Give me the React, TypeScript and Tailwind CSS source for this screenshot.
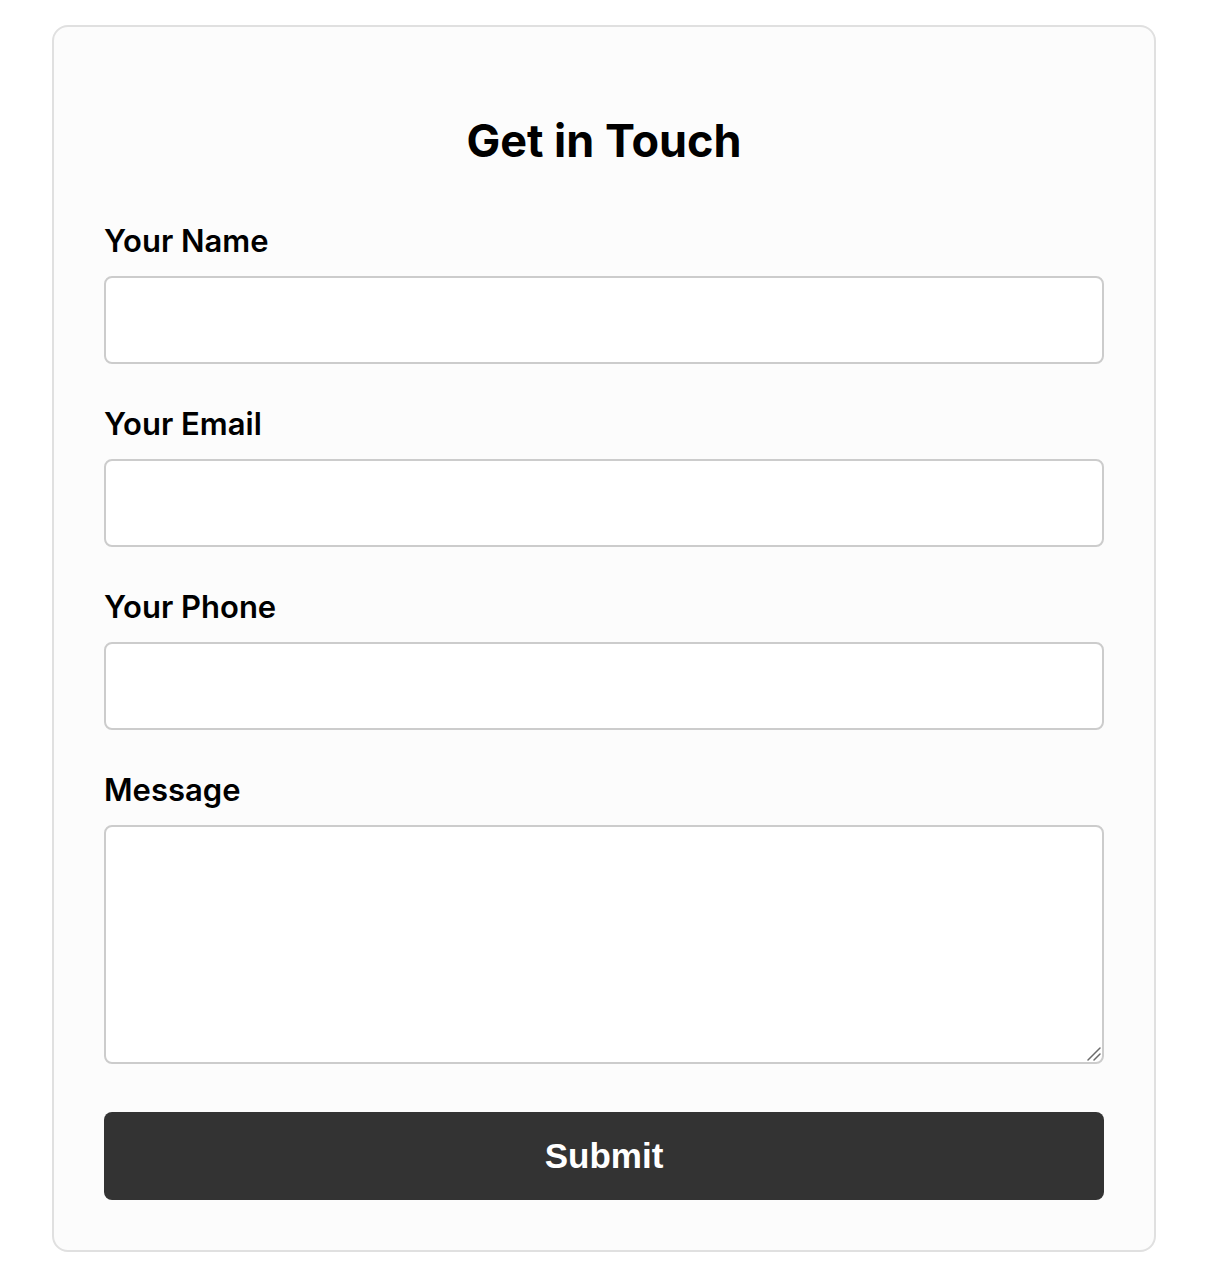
import React from 'react';

const fields = [
  { id: 'name', label: 'Your Name', type: 'text' },
  { id: 'email', label: 'Your Email', type: 'email' },
  { id: 'phone', label: 'Your Phone', type: 'tel' },
];

export default function App() {
  return (
    <div className="min-h-screen bg-white pt-[25px] pb-6" style={{ fontFamily: 'Inter, "Noto Sans", sans-serif' }}>
      <form className="mx-[52px] rounded-[16px] border-2 border-[#e0e0e0] bg-[#fcfcfc] px-[50px] pt-[38px] pb-[50px]">
        <h2 className="mt-[49px] mb-[54px] text-center text-[45px] font-bold leading-[1.21] text-black">Get in Touch</h2>
        {fields.map((f) => (
          <div key={f.id} className="mb-[41px]">
            <label htmlFor={f.id} className="mb-[17px] block text-[31px] font-semibold leading-[37px] text-black">
              {f.label}
            </label>
            <input
              id={f.id}
              type={f.type}
              className="block h-[88px] w-full rounded-[8px] border-2 border-[#cccccc] bg-white px-4 text-[28px]"
            />
          </div>
        ))}
        <div className="mb-[48px]">
          <label htmlFor="message" className="mb-[17px] block text-[31px] font-semibold leading-[37px] text-black">
            Message
          </label>
          <div className="relative">
            <textarea
              id="message"
              className="block h-[239px] w-full resize-none rounded-[8px] border-2 border-[#cccccc] bg-white px-4 py-3 text-[28px]"
            />
            {/* resize grip */}
            <svg className="pointer-events-none absolute right-[3px] bottom-[3px]" width="14" height="14" viewBox="0 0 14 14">
              <path d="M1 13 L13 1 M7 13 L13 7" stroke="#6b6b6b" strokeWidth="1.5" strokeLinecap="round" />
            </svg>
          </div>
        </div>
        <button
          type="submit"
          className="block h-[88px] w-full rounded-[8px] bg-[#333333] text-[35px] font-bold text-white"
          style={{ fontFamily: '"Liberation Sans", Arial, sans-serif' }}
        >
          Submit
        </button>
      </form>
    </div>
  );
}
